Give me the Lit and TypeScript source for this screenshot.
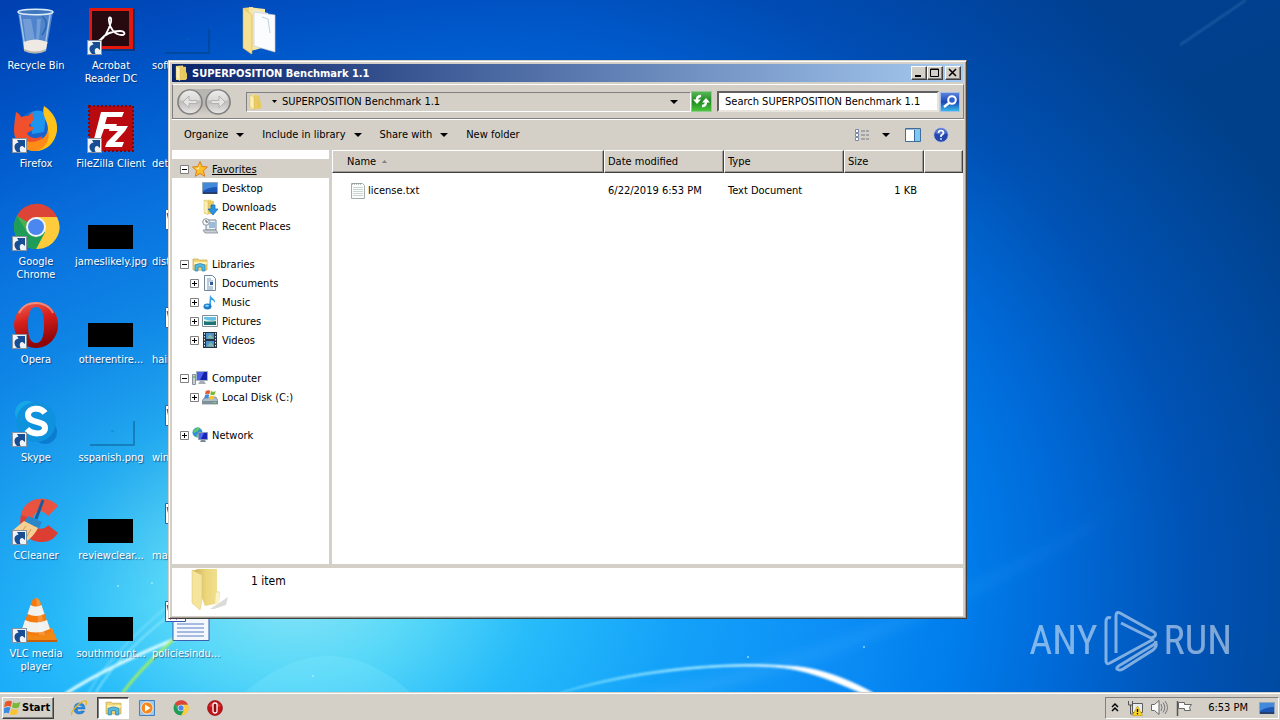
import { LitElement, html, svg, css, nothing, TemplateResult } from "lit";
import { customElement } from "lit/decorators.js";
import { classMap } from "lit/directives/class-map.js";

const icon = (size: number, box: number, body: unknown) =>
  html`<svg width=${size} height=${size} viewBox="0 0 ${box} ${box}" aria-hidden="true">${body}</svg>`;

/* Small arrow badge in the lower left corner of a shortcut */
const shortcut = svg`
  <rect x="0.5" y="33.5" width="14" height="14" fill="#eef3f8" stroke="#8a94a0"/>
  <path d="M5 47C1 43 2 38 6.500 37.500L5 35h8v8l-2.500-2C8 41 7 43 8.500 47z" fill="#174d92"/>`;

const recycleBin = svg`
  <path d="M6 5 12 44q11 5 22 0L41 5z" fill="#8fb6dc" fill-opacity=".55"/>
  <path d="M8 8 13 40M38 8 33 40" stroke="#dfeefa" stroke-opacity=".6" stroke-width="1.500" fill="none"/>
  <path d="M11 12h8l4 22h-9zM25 12h4l-2 22h-3z" fill="#dcebf8" fill-opacity=".25"/>
  <path d="M30 9c6 5 5 12 0 19" stroke="#2c68b0" stroke-width="1.500" fill="none"/>
  <path d="M11.500 35q12-5 24 0L34 43q-11 5-22 0z" fill="#eee9e2"/>
  <path d="M12 42q11 5 22 0v2q-11 5-22 0z" fill="#b8b4ae"/>
  <ellipse cx="23.500" cy="5" rx="17.500" ry="2.800" fill="#3e77bd" stroke="#dcebf7" stroke-width="1.600"/>`;

const acrobat = svg`
  <path d="M3 2h45v42H3z" fill="#111" fill-opacity=".35"/>
  <path d="M2 1h44v41H2z" fill="#e2180e"/><path d="M5 4h37v35H5z" fill="#260a10"/>
  <path d="M12 34c6-3 10-12 12-19 1-6-3-6-2-1 1 8 6 14 13 14 4 0 3-4-2-4-8 0-15 3-20 9-1 1-2 1-1 1z" fill="none" stroke="#fff" stroke-width="1.800"/>
  ${shortcut}`;

const firefox = svg`
  <circle cx="24" cy="24" r="18" fill="#1a62cc"/>
  <path d="M18 9c5-5 12-4 16 0l-2 18-12 2z" fill="#1d95ee"/>
  <path d="M4 7c3 1 4 3 5 5 3-1 5-1 7-1 1-1 2-2 5-3-1 3 0 4 1 6-2 2-3 5-5 6 0 2 3 2 5 2-1 4-4 4-7 6 2 5 9 7 15 3 1 6-3 12-8 14C10 44 2 36 2 26c0-7 1-12 2-19z" fill="#f0502c"/>
  <path d="M32 1c9 6 14 14 13 25-2 12-10 20-22 20-6 0-11-3-14-6 13 3 27-3 27-16 0-8-7-14-4-23z" fill="#ffc21b"/>
  <path d="M8 33c10 8 26 3 28-8 3 11-4 21-15 21C14 45 9 39 8 33z" fill="#ff8c16"/>${shortcut}`;

const filezilla = svg`
  <path d="M2 1h44v45H2z" fill="#b80a0f" stroke="#840508" stroke-width="2" stroke-dasharray="2 2"/>
  <path d="M14 7h23l-2 5H20l-2 7h12l-2 5H17l-5 14H6z" fill="#fff"/>
  <path d="M23 21h18l-3 5-10 11h9l-2 5H18l2-5 11-11h-9z" fill="#fff"/>${shortcut}`;

const chromeMark = svg`
  <circle cx="24" cy="24" r="22" fill="#4caf50"/>
  <path d="M24 24 5 13A22 22 0 0 1 45 14H24z" fill="#dc4437"/>
  <path d="M24 14h21a22 22 0 0 1-21 32l9-17z" fill="#fdcb3c"/>
  <path d="M5 13a22 22 0 0 0 19 33l9-17H15z" fill="#1f9d58"/>
  <circle cx="24" cy="24" r="10" fill="#f2f4f6"/><circle cx="24" cy="24" r="8" fill="#4b87ee"/>`;

const operaMark = svg`
  <path fill-rule="evenodd" d="M24 1a22 23 0 1 0 .1 0zM24 6c6 0 8 7 8 18s-2 18-8 18-8-7-8-18 2-18 8-18z" fill="url(#operaRed)"/>
  <path d="M7 12C12 3 18 2 24 2s14 3 17 10" fill="none" stroke="#ffb4a4" stroke-opacity=".6" stroke-width="2"/>`;

const skype = svg`
  <circle cx="15" cy="14" r="12" fill="#16a7e8"/><circle cx="33" cy="33" r="12" fill="#0b7cd0"/>
  <circle cx="24" cy="23" r="20" fill="#0f92de"/>
  <path d="M33 14c-4-6-17-6-17 2 0 9 17 5 17 13 0 7-13 7-18 1" fill="none" stroke="#fff" stroke-width="6"/>${shortcut}`;

const ccleaner = svg`
  <path d="M46 9C35-3 13 0 9 18c-4 17 8 27 21 27 7 0 12-3 16-9l-10-8c-4 6-14 5-15-4-1-10 9-14 15-5z" fill="#dd3e32"/>
  <path d="M46 9C35-3 13 0 9 18l12 4c1-7 10-10 15-3z" fill="#f2644c" fill-opacity=".6"/>
  <path d="M31 3 24 22" stroke="#1b5c98" stroke-width="3"/>
  <path d="m16 19 14 6-3 6-15-6z" fill="#2b87c8"/>
  <path d="m12 24 14 7c-4 8-11 14-16 15L0 34z" fill="#f6cf92"/>
  <path d="m14 29-6 8m11-5-5 9" stroke="#cf9a55"/>${shortcut}`;

const vlc = svg`
  <path d="m8 33-4 12h41l-5-12z" fill="#f28713"/><path d="M4 45h41v2H4z" fill="#c95f06"/>
  <path d="M20.500 5q3.500-4 7 0L39 37q-15 7-30 0z" fill="#f47b0c"/>
  <path d="m18.500 10-3 9q8.500 4 17 0l-3-9q-5.500 3-11 0zM13 25l-3 9q14 7 28 0l-3-9q-11 5-22 0z" fill="#f1f1ee"/>
  <path d="m24 2 4 4 5 34h-6z" fill="#fff" fill-opacity=".2"/>${shortcut}`;

const blackThumb = svg`<path d="M1 22h45v24H1z" fill="#000"/>`;
const clearThumb = svg`<path d="M3 46h44V22" fill="none" stroke="#03365e" stroke-opacity=".45" stroke-width="1.500"/>
  <path d="M24 32h3" stroke="#0c73b0" stroke-opacity=".6"/>`;
const wordDoc = svg`
  <path d="M11 .5h36v45H11z" fill="#f3f8ff" stroke="#3c5fae"/>
  <path d="M15 29h27m-27 4h27m-27 4h27m-27 4h27" stroke="#5b7cc4"/>
  <path d="M3.500 6.500h20v20h-20z" fill="#fff" stroke="#365ab0"/>
  <path d="m5.500 10 3 12 3-9 3 9 3-12" fill="none" stroke="#7a3fb0" stroke-width="2"/>`;
const openFolder = svg`
  <path d="m6 1 10-1v40l-2 7-8-6z" fill="#efd57a"/>
  <path d="m12 0 16 2v38l-14 4z" fill="#f7e7a5"/>
  <path d="m16 3 15 3v36l-15-3z" fill="#e9ecef"/>
  <path d="m17 5 21 3v37l-21-6z" fill="#fbfcfd" stroke="#c4ccd2" stroke-width=".7"/>
  <path d="m25 10 6 2 2 14" stroke="#bcd1e0" fill="none"/>
  <path d="M6 1 15 8v39l-9-6z" fill="#f6e093" stroke="#c9a94c" stroke-width=".5"/>`;
const empty = svg``;

const folder = svg`
  <path d="m2 1 7-.5V15H2z" fill="#f4e08e"/><path d="m6 1 6 1v13H5z" fill="#e9cc66"/>
  <path d="m2 1 4 2v13l-4-3z" fill="#fbefb5" stroke="#cdae50" stroke-width=".4"/>
  <path d="m11 4 2 5v5l-4 1V5z" fill="#e6c85c"/>`;
const bigFolder = svg`
  <path d="M22 41 40 29l-2 8-12 4z" fill="#999" fill-opacity=".35"/>
  <path d="m4 3 6-2h19v22l3 1-1 11-14 3z" fill="url(#folderGold)"/>
  <path d="m4 2 10 5v24l-2 11-8-7z" fill="#f5e49c" stroke="#dcc068" stroke-width=".5"/>
  <path d="m28 25 3-1v11l-4 3z" fill="#fbf3c8"/>`;
const star = svg`<path d="m8 .5 2.200 5 5.300.5-4 3.700 1.200 5.600L8 12.500l-4.700 2.800 1.200-5.600-4-3.700 5.300-.5z" fill="#fdbe2c" stroke="#dd7f1a"/><path d="m8 3-1.500 3.800-3 .5 3 1.500z" fill="#fff0a0"/>`;
const desktopIcon = svg`<path d="M.5 2.500h15v11H.5z" fill="#1c55b4" stroke="#8fa5bb"/><path d="m1 3 14 0v4Q7 7 1 11z" fill="#4289db"/><path d="M1 12h14v2H1z" fill="#23406e"/>`;
const downloads = svg`${folder}<path d="M9 6h4v4h3l-5 6-5-6h3z" fill="#2796e2" stroke="#1163b0" stroke-width=".7"/>`;
const recent = svg`<path d="M4 2h10v10H4z" fill="#e9f1f7" stroke="#788794"/><path d="M7 5h6M7 7h6M7 9h6" stroke="#4f86c0"/><path d="M1 12h13l2 3H3z" fill="#c8d0d6" stroke="#77828c" stroke-width=".7"/><circle cx="4" cy="4" r="3.300" fill="#f4f6f8" stroke="#8996a1"/><path d="M4 2v2h2" fill="none" stroke="#555"/>`;
const libraries = svg`<path d="M1 3h5l1 1h8v10H1z" fill="#f0d676" stroke="#c6a549" stroke-width=".7"/><path d="M2 6h13v2H2z" fill="#fff3b8"/><path d="M3 15V9q5-3 10 0v6h-3v-4H6v4z" fill="#54b8e0" stroke="#2683b4" stroke-width=".7"/>`;
const documents = svg`<path d="M2.500.5h8l3 3v12h-11z" fill="#f8fbfe" stroke="#72879c"/><path d="M5 4h4M5 6h6M5 12h6M5 14h6M5 8h2M5 10h2" stroke="#7e9ab5"/><path d="M8 7h3v3H8z" fill="#2d5b94"/>`;
const music = svg`<path d="M8 0c0 4 6 4 5 9-1-2-2-3-4-3v7H7z" fill="#3ba3e6"/><ellipse cx="5.500" cy="12.500" rx="4" ry="3" fill="#1c7ccc"/><ellipse cx="5" cy="11.800" rx="2" ry="1" fill="#8fd3fb"/>`;
const pictures = svg`<path d="M.5 2.500h15v11H.5z" fill="#fff" stroke="#7d8e9d"/><path d="M2 4h12v8H2z" fill="#66bfe6"/><path d="M2 8q5 1 12-1v5H2z" fill="#1c7378"/><path d="M2 6q6 3 12 1v1Q8 9 2 8z" fill="#e6f6e0"/>`;
const videos = svg`<path d="M1 0h14v16H1z" fill="#263340"/><path d="M4 1h8v6H4zm0 8h8v6H4z" fill="#4a93cc"/><path d="m5 6 3-4 4 5zm0 8 4-4 3 5z" fill="#86b6a0"/><path d="M2.500 1v15M13.500 1v15" stroke="#e4e9ee" stroke-dasharray="1.500 1.500"/>`;
const computer = svg`<path d="M.5 4.500h3v10h-3z" fill="#c9d0d5" stroke="#87919a"/><path d="M4.500 1.500h11v9h-11z" fill="#1622a8" stroke="#a7b3c2"/><path d="m5 2 7 0-4 8H5z" fill="#4a62ea"/><path d="M8 11h4l2 3H6z" fill="#a6adb5"/><path d="M2 6v2" stroke="#3aa63a"/>`;
const flagMark = svg`
  <path d="M1 3q4-2.500 6.500-.5l-1.300 5Q4 5.500 0 8z" fill="#e5572b"/><path d="M8.500 3q3 2 7-.3l-1.500 5q-3.500 2-6.500 0z" fill="#78b93a"/>
  <path d="M0 9q4-2.500 6-.5l-1.500 5Q2 12-1 14z" fill="#3c8be0"/><path d="M7 9q3 2 6.500 0L12 14q-3.500 2-6.500 0z" fill="#fbc32f"/>`;
const disk = svg`<path d="m2 9 12-1 2 4v3H0v-3z" fill="#aebcc6" stroke="#6d7c87" stroke-width=".7"/><path d="M0 12h16v3H0z" fill="#809099"/><path d="M11 13.500h3" stroke="#5be05b"/><g transform="translate(3 0) scale(.7)">${flagMark}</g>`;
const network = svg`<circle cx="5.500" cy="5.500" r="5" fill="#2b93dc"/><path d="M1 4q4-5 7-3l-2 3-4 2zm3 6 1-3 4 1-3 2z" fill="#63c46b"/><path d="M6.500 5.500h9v7h-9z" fill="#1a25b8" stroke="#8c9cb4"/><path d="m7 6 5 0-3 6H7z" fill="#4a69ee"/><path d="M9 13h4l1 2H8z" fill="#7c8b98"/>`;
const textFile = svg`<path d="M1.500.5h11l2 2v13h-13z" fill="#fbfcfc" stroke="#a4ada9"/><path d="M3 4.500h10M3 6.500h10M3 8.500h10M3 10.500h10M3 12.500h10" stroke="#ccd6d0"/><path d="M2 1h10" stroke="#7b8a84" stroke-dasharray="1 1"/>`;
const ie = svg`<path d="M3 9h11q0-6-5.500-6T3 9q0 5 5.500 5 4 0 5-3h-3q-4 2-4.500-2z" fill="#2a8be0" stroke="#1161b4" stroke-width=".5"/><path d="M6 7q2-3 5 0z" fill="#d4d0c8"/><path d="M1 15Q-1 13 5 7 12 0 15 1q1.500 1-.5 4" fill="none" stroke="#e8b62a" stroke-width="1.400"/>`;
const player = svg`<path d="M.5.5h15v15H.5z" fill="#9cc6ea" stroke="#4380bd"/><circle cx="8" cy="8" r="6" fill="#f5871c" stroke="#fff" stroke-width=".7"/><path d="m6 4.500 5.500 3.500L6 11.500z" fill="#fff"/>`;

interface Shortcut { label: string; art: unknown; clipped?: boolean }
const shortcuts: Shortcut[] = [
  { label: "Recycle Bin", art: recycleBin },
  { label: "Firefox", art: firefox },
  { label: "Google\nChrome", art: svg`${chromeMark}${shortcut}` },
  { label: "Opera", art: svg`${operaMark}${shortcut}` },
  { label: "Skype", art: skype },
  { label: "CCleaner", art: ccleaner },
  { label: "VLC media\nplayer", art: vlc },
  { label: "Acrobat\nReader DC", art: acrobat },
  { label: "FileZilla Client", art: filezilla },
  { label: "jameslikely.jpg", art: blackThumb },
  { label: "otherentire...", art: blackThumb },
  { label: "sspanish.png", art: clearThumb },
  { label: "reviewclear...", art: blackThumb },
  { label: "southmount...", art: blackThumb },
  { label: "soft", art: clearThumb, clipped: true },
  { label: "det", art: empty, clipped: true },
  { label: "dist", art: wordDoc, clipped: true },
  { label: "hair", art: wordDoc, clipped: true },
  { label: "win", art: wordDoc, clipped: true },
  { label: "ma", art: wordDoc, clipped: true },
  { label: "policiesindu...", art: wordDoc, clipped: true },
  { label: "", art: openFolder },
];

interface Node { label: string; art: unknown; box?: "+" | "-"; child?: boolean; active?: boolean }
const tree: Node[][] = [
  [
    { label: "Favorites", art: star, box: "-", active: true },
    { label: "Desktop", art: desktopIcon, child: true },
    { label: "Downloads", art: downloads, child: true },
    { label: "Recent Places", art: recent, child: true },
  ],
  [
    { label: "Libraries", art: libraries, box: "-" },
    { label: "Documents", art: documents, box: "+", child: true },
    { label: "Music", art: music, box: "+", child: true },
    { label: "Pictures", art: pictures, box: "+", child: true },
    { label: "Videos", art: videos, box: "+", child: true },
  ],
  [
    { label: "Computer", art: computer, box: "-" },
    { label: "Local Disk (C:)", art: disk, box: "+", child: true },
  ],
  [{ label: "Network", art: network, box: "+" }],
];

const expander = (kind?: "+" | "-") => html`<svg class="expander" width="9" height="9" viewBox="0 0 9 9" aria-hidden="true">
  ${kind ? svg`<path d="M.5.5h8v8h-8z" fill="#fff" stroke="#808080"/><path d=${kind === "+" ? "M2 4.500h5M4.500 2v5" : "M2 4.500h5"} stroke="#000"/>` : nothing}
</svg>`;

const caret = html`<svg class="caret" width="8" height="4" viewBox="0 0 8 4" aria-hidden="true"><path d="M0 0h8L4 4z" fill="#000"/></svg>`;

const base = css`
  :host, * { box-sizing: border-box; }
  svg { display: block; flex: none; }
  button, input {
    font: inherit;
    color: inherit;
    margin: 0;
    padding: 0;
    border: 0;
    border-radius: 0;
    background: none;
  }
  .defs { position: absolute; }
`;

@customElement("desktop-wallpaper")
export class DesktopWallpaper extends LitElement {
  static styles = css`
    :host {
      display: block;
      background:
        linear-gradient(155deg, rgba(0, 44, 160, 0.62), rgba(0, 60, 180, 0.36) 22%, rgba(0, 90, 200, 0) 52%),
        radial-gradient(ellipse 75% 104% at 23% 84%, #8ce6f6 0, #58d8f8 13%, #28bcfa 25%, #14a2f9 40%, #0c8ef6 57%, #007eec 69%, #006ad8 80%, #0052b4 94%, #00408a 116%);
    }
    svg { display: block; width: 100%; height: 100%; }
  `;
  render() {
    return html`<svg viewBox="0 0 1280 692" preserveAspectRatio="none" aria-hidden="true">
      <defs>
        <filter id="soft"><feGaussianBlur stdDeviation="1.200"/></filter>
        <filter id="wide"><feGaussianBlur stdDeviation="6"/></filter>
        <linearGradient id="arc"><stop offset="0" stop-color="#6fdcff" stop-opacity=".7"/><stop offset=".55" stop-color="#b8efff"/><stop offset=".8" stop-color="#fff"/></linearGradient>
        <linearGradient id="beam"><stop offset="0" stop-color="#3fb0ff" stop-opacity=".4"/><stop offset="1" stop-color="#3fb0ff" stop-opacity="0"/></linearGradient>
      </defs>
      <path d="M640 700 Q900 650 1150 490" fill="none" stroke="url(#beam)" stroke-width="12" filter="url(#wide)"/>
      <path d="M1180 45 1246 0" stroke="#5c9ad0" stroke-opacity=".35" stroke-width="2" filter="url(#soft)"/>
      <path d="M245 692Q330 620 410 692z" fill="#8ff0ff" fill-opacity=".2"/>
      <path d="M560 693C655 666 750 663 786 668 815 672 845 686 862 693H873C842 676 812 666 784 666 742 662 640 666 560 693z" fill="url(#arc)" stroke="url(#arc)" stroke-width="1" filter="url(#soft)"/>
      <g fill="none" filter="url(#soft)">
        <path d="M65 694Q110 665 185 635" stroke="#d6faff" stroke-width="3"/>
        <path d="M95 694Q120 650 190 600" stroke="#a8f2ff" stroke-opacity=".8" stroke-width="1.500"/>
        <path d="M88 694Q105 660 165 608" stroke="#a8f2ff" stroke-opacity=".5" stroke-width="1.500"/>
        <path d="M122 694Q140 668 182 632" stroke="#a4f05a" stroke-width="2.500"/>
      </g>
      <g fill="#c6f4ff" fill-opacity=".7"><circle cx="118" cy="586" r="1"/><circle cx="152" cy="583" r="1"/><circle cx="748" cy="657" r="1"/><circle cx="864" cy="647" r="1"/><circle cx="313" cy="676" r="1"/></g>
    </svg>`;
  }
}

@customElement("desktop-icons")
export class DesktopIcons extends LitElement {
  static styles = [base, css`
    :host {
      display: grid;
      grid-auto-flow: column;
      grid-template-rows: repeat(7, 98px);
      grid-auto-columns: 75px;
      justify-content: start;
    }
    .item {
      display: flex;
      flex-direction: column;
      align-items: center;
      justify-content: flex-start;
      gap: 4px;
      width: 72px;
      padding-top: 7px;
      color: #fff;
      line-height: 13px;
      white-space: pre;
      text-shadow: 1px 1px 1px rgba(0, 30, 80, 0.6);
    }
    .clipped .label { align-self: flex-start; padding-left: 2px; }
  `];
  render() {
    return html`
      <svg class="defs" width="0" height="0" aria-hidden="true"><defs>
        <linearGradient id="operaRed" x1="0" y1="0" x2=".3" y2="1"><stop offset="0" stop-color="#f06a58"/><stop offset=".45" stop-color="#d8201c"/><stop offset="1" stop-color="#8e0508"/></linearGradient>
      </defs></svg>
      ${shortcuts.map((s) => html`<button class=${classMap({ item: true, clipped: !!s.clipped })} aria-label=${s.label || "Folder"}>
        ${icon(48, 48, s.art)}<span class="label">${s.label}</span></button>`)}`;
  }
}

@customElement("explorer-window")
export class ExplorerWindow extends LitElement {
  static styles = [base, css`
    :host {
      display: flex;
      flex-direction: column;
      padding: 2px;
      background: #d4d0c8;
      border: 1px solid;
      border-color: #d4d0c8 #404040 #404040 #d4d0c8;
      box-shadow: inset 1px 1px #fff, inset -1px -1px #a09c94;
    }
    .title {
      display: flex;
      align-items: center;
      gap: 2px;
      height: 18px;
      margin: 1px 1px 2px 1px;
      padding: 0 2px;
      background: linear-gradient(90deg, #0a246a, #a6caf0);
      color: #fff;
      font-weight: bold;
    }
    .title h1 { flex: 1; margin: 0; font-size: 11px; }
    .frame-button {
      display: grid;
      place-items: center;
      width: 16px;
      height: 14px;
      background: #d4d0c8;
      border: 1px solid;
      border-color: #fff #404040 #404040 #fff;
      box-shadow: inset -1px -1px #808080;
    }
    .frame-button + .frame-button { margin-left: -2px; }
    .frame-button.close { margin-left: 0; }
    .nav {
      display: flex;
      align-items: center;
      height: 35px;
      margin-left: 1px;
      padding: 0 3px 0 4px;
      border: 1px solid;
      border-color: #fff #808080 #808080 #808080;
      box-shadow: 0 1px #fff;
    }
    .arrows {
      display: flex;
      gap: 2px;
      margin-right: 15px;
      border-radius: 13px;
      background: linear-gradient(#b8b6b0 60%, #d4d0c8);
    }
    .address {
      flex: 1;
      display: flex;
      align-items: center;
      gap: 8px;
      height: 20px;
      padding: 0 12px 0 1px;
      border: 1px solid;
      border-color: #808080 #fff #fff #808080;
    }
    .address .place { flex: 1; display: flex; align-items: center; gap: 5px; }
    .refresh { margin-right: 5px; }
    .search {
      width: 222px;
      height: 21px;
      margin-right: 1px;
      padding: 0 6px;
      background: #fff;
      border: 2px solid;
      border-color: #606060 #e8e4dc #e8e4dc #606060;
    }
    .commands {
      display: flex;
      align-items: center;
      gap: 18px;
      height: 31px;
      padding: 0 15px 0 13px;
    }
    .commands button { display: flex; align-items: center; gap: 8px; }
    .commands .views { gap: 12px; margin: 0 -3px 0 auto; }
    .commands .help { margin-left: -6px; }
    .body {
      flex: 1;
      min-height: 0;
      display: grid;
      grid-template-columns: 158px 1fr;
      margin: 0 1px;
    }
    nav { padding-top: 9px; background: #fff; border-right: 1px solid #d4d0c8; }
    ul { list-style: none; margin: 0 0 19px; padding: 0; }
    .node {
      display: flex;
      align-items: center;
      gap: 3px;
      height: 19px;
      padding: 1px 0 0 8px;
      color: #000;
      text-decoration: none;
    }
    .node.child { padding-left: 18px; }
    .node.active { background: #d4d0c8; text-decoration: underline; }
    .node .name { margin-left: 1px; }
    .files { background: #fff; border-left: 2px solid #d4d0c8; }
    table { width: 100%; table-layout: fixed; border-collapse: separate; border-spacing: 0; }
    th, td { padding: 0 4px; text-align: left; font-weight: normal; white-space: nowrap; }
    th {
      height: 23px;
      padding-left: 3px;
      background: #d4d0c8;
      border: 1px solid;
      border-color: #fff #404040 #404040 #fff;
      box-shadow: inset -1px -1px #a09c94;
    }
    th:first-child { padding-left: 14px; }
    td { height: 17px; }
    td:first-child { padding-left: 18px; }
    tbody::before { content: ""; display: block; height: 9px; }
    .size { text-align: right; padding-right: 7px; }
    .cell { display: flex; align-items: center; gap: 2px; }
    .head { display: flex; align-items: center; gap: 6px; }
    .details {
      display: flex;
      gap: 19px;
      height: 52px;
      margin: 0 1px;
      padding: 0 16px;
      background: #fff;
      border-top: 4px solid #d4d0c8;
      font-size: 12px;
    }
    .details p { margin: 5px 0 0; line-height: 16px; }
    .c-name { width: 272px; } .c-date { width: 120px; } .c-type { width: 120px; } .c-size { width: 80px; }
  `];

  private arrow(flip: boolean): TemplateResult {
    return html`<button aria-label=${flip ? "Forward" : "Back"}>${icon(26, 26, svg`
      <circle cx="13" cy="13" r="12" fill="url(#glass)" stroke="#7f7f7f" stroke-width="1.500"/>
      <path d="M3 11a10 10 0 0 1 20 0q-10 3-20 0z" fill="#fff" fill-opacity=".35"/>
      <path d=${flip ? "M6 11.500h8V7l6 6-6 6v-4.500H6z" : "M20 11.500h-8V7l-6 6 6 6v-4.500h8z"} fill="#e4e3e1" stroke="#b4b3b0"/>`)}</button>`;
  }

  render() {
    return html`
      <svg class="defs" width="0" height="0" aria-hidden="true"><defs>
        <linearGradient id="glass" x2="0" y2="1"><stop offset="0" stop-color="#e4e4e2"/><stop offset=".5" stop-color="#bfbebb"/><stop offset="1" stop-color="#e8e8e6"/></linearGradient>
        <linearGradient id="folderGold"><stop offset="0" stop-color="#c9ad50"/><stop offset=".5" stop-color="#ecd67c"/><stop offset="1" stop-color="#f2e193"/></linearGradient>
        <linearGradient id="green" x2="0" y2="1"><stop offset="0" stop-color="#5ab85a"/><stop offset=".5" stop-color="#1d8a20"/><stop offset="1" stop-color="#4cc93c"/></linearGradient>
        <linearGradient id="blue" x2="0" y2="1"><stop offset="0" stop-color="#5a86dc"/><stop offset=".5" stop-color="#1c48b8"/><stop offset="1" stop-color="#38c0ea"/></linearGradient>
      </defs></svg>
      <header class="title">
        ${icon(16, 16, folder)}<h1>SUPERPOSITION Benchmark 1.1</h1>
        <button class="frame-button" aria-label="Minimize">${icon(10, 10, svg`<path d="M1 7h6v2H1z"/>`)}</button>
        <button class="frame-button" aria-label="Maximize">${icon(10, 10, svg`<path d="M.5 1h8v7.500h-8zM.5 1.500h8" fill="none" stroke="#000"/>`)}</button>
        <button class="frame-button close" aria-label="Close">${icon(10, 10, svg`<path d="m1 1 7 7m0-7L1 8" stroke="#000" stroke-width="1.500"/>`)}</button>
      </header>
      <div class="nav">
        <div class="arrows">${this.arrow(false)}${this.arrow(true)}</div>
        <div class="address">
          ${icon(16, 16, folder)}
          <button class="place"><svg width="5" height="3" viewBox="0 0 5 3" aria-hidden="true"><path d="M0 0h5L2.500 3z"/></svg>SUPERPOSITION Benchmark 1.1</button>
          <button aria-label="Previous locations">${caret}</button>
        </div>
        <button class="refresh" aria-label="Refresh">${icon(21, 21, svg`
          <path d="M.5.5h20v20H.5z" fill="url(#green)" stroke="#8fce8a"/>
          <path d="M10 5Q6 5 6 9M11 15q4 0 4-4" fill="none" stroke="#fff" stroke-width="2.500"/>
          <path d="M2 8.500h8L6 13zM11 11.500h8L15 7z" fill="#fff"/>`)}</button>
        <input class="search" type="text" aria-label="Search" value="Search SUPERPOSITION Benchmark 1.1">
        <button aria-label="Go">${icon(20, 20, svg`
          <path d="M.5.5h19v19H.5z" fill="url(#blue)" stroke="#a4bce8"/>
          <circle cx="12" cy="8" r="3.800" fill="#2d62cc" stroke="#fff" stroke-width="2"/><path d="m9 11-5 4" stroke="#fff" stroke-width="2.500"/>`)}</button>
      </div>
      <div class="commands">
        <button>Organize ${caret}</button>
        <button>Include in library ${caret}</button>
        <button>Share with ${caret}</button>
        <button>New folder</button>
        <button class="views" aria-label="Change your view">${icon(16, 16, svg`
          <path d="M1.500 2.500h3v3h-3zm0 4h3v3h-3zm0 4h3v3h-3z" fill="#fff" stroke="#7888a8"/>
          <path d="M7 4h4m1 0h3M7 8h4m1 0h3M7 12h4m1 0h3" stroke="#707884"/>`)}${caret}</button>
        <button aria-label="Preview pane">${icon(16, 16, svg`
          <path d="M.5 1.500h15v13H.5z" fill="#fff" stroke="#3e6c9e"/><path d="M10 3h5v11h-5z" fill="#7ccaf0"/><path d="M1 2.500h14" stroke="#9bb8d2"/><path d="M9.500 3v11" stroke="#3e6c9e"/>`)}</button>
        <button class="help" aria-label="Help">${icon(16, 16, svg`
          <circle cx="8" cy="8" r="7.300" fill="#2546ac" stroke="#c2cbe4"/><path d="M2 6a6 5 0 0 1 12 0q-6 3-12 0z" fill="#7393e4" fill-opacity=".6"/>
          <path d="M5.500 6q0-2.500 2.500-2.500T10.500 6Q10 7.500 8 8.500V10M8 11.300v1.500" fill="none" stroke="#fff" stroke-width="1.600"/>`)}</button>
      </div>
      <div class="body">
        <nav aria-label="Folders">
          ${tree.map((group) => html`<ul>${group.map((n) => html`<li>
            <a href="#" class=${classMap({ node: true, child: !!n.child, active: !!n.active })}>
              ${expander(n.box)}${icon(16, 16, n.art)}<span class="name">${n.label}</span></a></li>`)}</ul>`)}
        </nav>
        <div class="files">
          <table>
            <colgroup><col class="c-name"><col class="c-date"><col class="c-type"><col class="c-size"><col></colgroup>
            <thead><tr>
              <th><span class="head">Name <svg width="5" height="3" viewBox="0 0 5 3" aria-hidden="true"><path d="M0 3h5L2.500 0z" fill="#808080"/></svg></span></th>
              <th>Date modified</th><th>Type</th><th>Size</th><th></th>
            </tr></thead>
            <tbody><tr>
              <td><span class="cell">${icon(16, 16, textFile)}license.txt</span></td>
              <td>6/22/2019 6:53 PM</td><td>Text Document</td><td class="size">1 KB</td><td></td>
            </tr></tbody>
          </table>
        </div>
      </div>
      <footer class="details">${icon(44, 44, bigFolder)}<p>1 item</p></footer>`;
  }
}

@customElement("task-bar")
export class TaskBar extends LitElement {
  static styles = [base, css`
    :host {
      display: flex;
      align-items: center;
      height: 28px;
      padding: 2px 1px 0 2px;
      background: #d4d0c8;
      border-top: 1px solid #d4d0c8;
      box-shadow: inset 0 1px #fff;
    }
    .start {
      display: flex;
      align-items: center;
      gap: 1px;
      width: 52px;
      height: 22px;
      margin-right: 9px;
      padding-left: 1px;
      font-weight: bold;
      border: 1px solid;
      border-color: #fff #404040 #404040 #fff;
      box-shadow: inset -1px -1px #808080;
    }
    .launch { display: flex; gap: 2px; }
    .launch button {
      display: grid;
      place-items: center;
      width: 32px;
      height: 22px;
      border: 1px solid transparent;
    }
    .launch .open {
      background: #fff;
      border-color: #404040 #fff #fff #404040;
      box-shadow: inset 1px 1px #808080;
    }
    .tray {
      display: flex;
      align-items: center;
      gap: 8px;
      height: 22px;
      margin-left: auto;
      padding: 0 3px 0 5px;
      border: 1px solid;
      border-color: #808080 #fff #fff #808080;
    }
    time { margin: 0 3px 0 8px; }
  `];
  render() {
    return html`
      <button class="start">${icon(17, 16, flagMark)}Start</button>
      <div class="launch">
        <button aria-label="Internet Explorer">${icon(16, 16, ie)}</button>
        <button class="open" aria-label="Windows Explorer">${icon(17, 16, libraries)}</button>
        <button aria-label="Media Player">${icon(16, 16, player)}</button>
        <button aria-label="Google Chrome">${icon(16, 48, chromeMark)}</button>
        <button aria-label="Opera">${icon(16, 16, svg`<circle cx="8" cy="8" r="7.500" fill="#c4141a" stroke="#7c0a0c" stroke-width=".6"/><path d="M2 6q6-7 12 0-6 2-12 0z" fill="#f07868" fill-opacity=".5"/><rect x="6" y="3" width="4" height="10" rx="1.800" fill="#8c0a10" stroke="#fff" stroke-width="1.300"/>`)}</button>
      </div>
      <div class="tray">
        <svg width="8" height="12" viewBox="0 0 8 12" aria-hidden="true"><path d="m1 5 3-3 3 3M1 9l3-3 3 3" fill="none" stroke="#000" stroke-width="1.500"/></svg>
        ${icon(16, 16, svg`<path d="M5.500 3.500h10v9h-10z" fill="#e8ecef" stroke="#5b5b5b"/><path d="M1.500 1v4h4V1M3.500 5v9h5" fill="none" stroke="#555"/><path d="m10.500 6 5 9.500h-10z" fill="#fcd423" stroke="#c49a00" stroke-width=".6"/><path d="M10.500 9v3m0 1v1.200" stroke="#000" stroke-width="1.300"/>`)}
        ${icon(17, 17, svg`<path d="M.5 5.500h3L8 1.500v14l-4.500-4h-3z" fill="#fafafa" stroke="#666"/><path d="M10 5q2 3.500 0 7M12 3.500q3.500 5 0 10M14 2q5 6.500 0 13" fill="none" stroke="#777"/>`)}
        ${icon(16, 16, svg`<path d="M1.500 1v15" stroke="#555" stroke-width="1.500"/><path d="M2.500 2.500h6v2h7l-2 3 1 3H8.500v-2h-6z" fill="#fafafa" stroke="#666"/>`)}
        <time>6:53 PM</time>
        <button aria-label="Show desktop">${icon(16, 16, desktopIcon)}</button>
      </div>`;
  }
}

@customElement("app-root")
export class AppRoot extends LitElement {
  static styles = css`
    :host {
      display: grid;
      grid-template-rows: minmax(0, 1fr) auto;
      height: 100vh;
      overflow: hidden;
      color: #000;
      font-family: "DejaVu Sans Condensed", "DejaVu Sans", "Noto Sans", sans-serif;
      font-size: 11px;
      line-height: 13px;
    }
    main { position: relative; overflow: hidden; }
    desktop-wallpaper { position: absolute; inset: 0; }
    desktop-icons { position: relative; }
    explorer-window {
      position: absolute;
      left: 168px;
      top: 60px;
      width: 799px;
      height: 559px;
    }
    .brand {
      position: absolute;
      right: 48px;
      bottom: 20px;
      display: flex;
      align-items: center;
      gap: 6px;
      color: #fff;
      opacity: 0.5;
      font: 40px/62px "Liberation Sans Narrow", "Roboto Condensed", "Liberation Sans", sans-serif;
    }
    .brand svg { display: block; }
  `;
  render() {
    return html`
      <main>
        <desktop-wallpaper></desktop-wallpaper>
        <desktop-icons></desktop-icons>
        <explorer-window></explorer-window>
        <div class="brand">
          <span>ANY</span>
          <svg width="54" height="62" viewBox="0 0 54 62" aria-hidden="true"><path d="M7 8Q2 6 2 12v39q0 4 4 2l44-24M12 43V6q0-5 4-3l34 19q3 2 0 5l-3 1L17 13M52 31q0 2-3 4L18 54q-6 3-5 5 2 2 6 0l30-19q4-3 3-7" fill="none" stroke="#fff" stroke-width="3"/></svg>
          <span>RUN</span>
        </div>
      </main>
      <task-bar></task-bar>`;
  }
}
